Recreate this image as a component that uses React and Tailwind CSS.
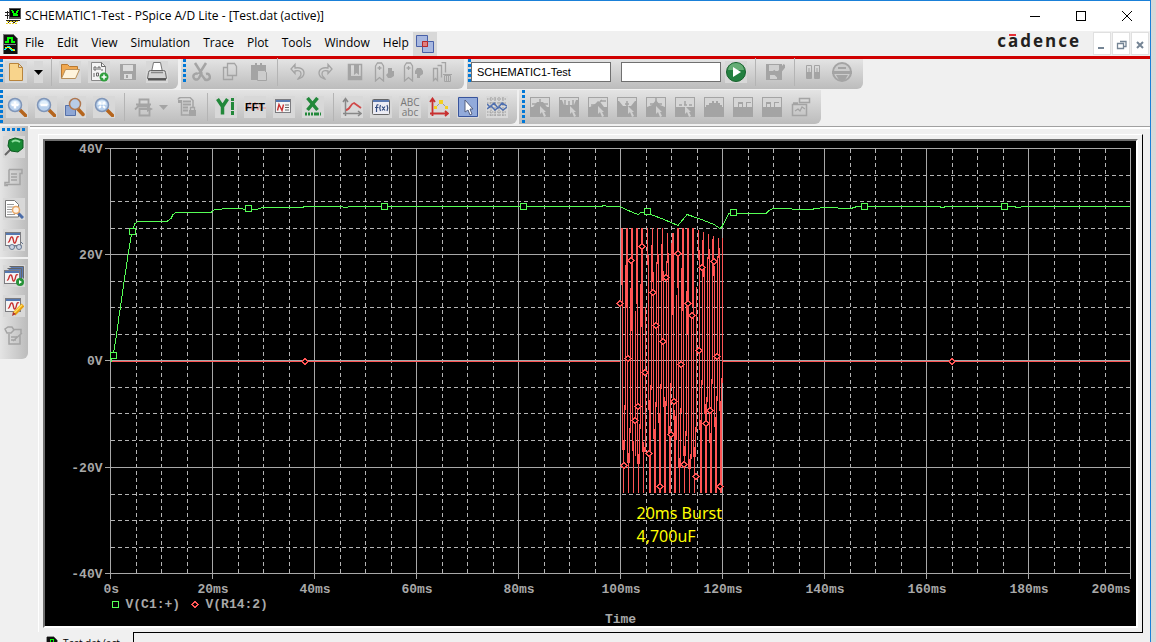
const XT = Array.from({ length: 11 }, (_, i) => 109.5 + i * 102);
const XS = XT.slice(0, 10).flatMap((x) => [x + 26, x + 51, x + 77]);
const YT = [148.5, 254.5, 360.5, 467.5, 573.5];
const YS = YT.slice(0, 4).flatMap((y) => [y + 27, y + 53, y + 80]);
const X_LABELS = ["20ms", "40ms", "60ms", "80ms", "100ms", "120ms", "140ms", "160ms", "180ms"];
const Y_LABELS = ["40V", "20V", "0V", "-20V", "-40V"];

const SQUARES = [[112, 355], [131, 231], [247, 208], [383, 206], [522, 206], [646, 211], [732, 212], [863, 206], [1003, 206]];
const DIAMONDS = [
  [304, 361], [951, 361],
  [619, 303], [630, 260], [641, 246], [627, 358], [637, 406], [634, 420], [623, 465], [644, 372], [648, 453],
  [659, 486], [652, 292], [655, 325], [662, 341], [665, 277], [677, 253], [680, 364], [673, 401], [670, 434],
  [683, 464], [695, 476], [687, 303], [691, 315], [701, 267], [713, 261], [698, 350], [716, 356], [709, 410],
  [705, 423], [719, 486],
];
const TRACE =
  "110,361 112,355 115,338 118,316 121,296 124,275 127,255 131,231 134,223 137,221 166,221 170,218 172,214 175,212 210,212 214,209 228,208 255,209 262,207 300,207 305,206 340,206 344,207 350,206 380,206 600,206 603,205 607,206 619,206 625,209 632,212 637,214 640,212 646,211 650,214 663,219 677,225 686,214 692,216 703,220 713,224 719,228 721,226 728,213 765,213 768,210 772,208 810,209 815,208 824,207 850,208 856,206 938,206 941,207 946,206 1012,206 1017,207 1023,206 1129,206";

function burstPath() {
  let d = "";
  for (let i = 0; i < 20; i++) {
    const t = 620.5 + Math.round(i * 5.1);
    const sag = i > 14 ? (i - 14) * 2 : i === 9 || i === 10 ? 5 : 0;
    const wideTop = i < 5 || (i > 9 && i < 15);
    const wideLow = (i > 4 && i < 11) || i > 14;
    const join = wideTop ? 285 + ((i * 23) % 50) : 250 + ((i * 17) % 35);
    const low = wideLow ? 400 + ((i * 29) % 45) : 450 + ((i * 13) % 25);
    d += `M${t} ${228 + sag}V${join}`;
    if (wideTop) d += `M${t + 1} ${228 + sag}V${join}`;
    d += `M${t + 1} ${join - 10}V${low}`;
    d += `M${t + 2} ${low - 10}V493`;
    if (wideLow) d += `M${t + 3} ${low - 4}V493`;
    d += `M${t + 3} ${join + 120}V${low}`;
    d += `M${t + 4} ${join - 20}V${join + 125}`;
  }
  return d;
}

function Chart() {
  return (
    <svg viewBox="45 141 1090 485" className="block h-full w-full bg-black" role="img" aria-label="Voltage against time">
      <g shapeRendering="crispEdges" fill="none" strokeWidth="1">
        <g stroke="#b4b4b4" strokeDasharray="4 3">
          {XS.map((x) => <path key={x} d={`M${x} 149V573`} />)}
          {YS.map((y) => <path key={y} d={`M110 ${y}H1129`} />)}
        </g>
        <g stroke="#a8a8a8">
          {XT.map((x) => <path key={x} d={`M${x} 148V579`} />)}
          {YT.map((y) => <path key={y} d={`M104 ${y}H1130`} />)}
        </g>
        <path d="M110 361.5H619M721 361.5H1129" stroke="#ff5555" />
        <path d={burstPath()} stroke="#ff5555" />
        <polyline points={TRACE} stroke="#55ff55" transform="translate(.5 .5)" />
        <g fill="#000" stroke="#ff5555">
          {DIAMONDS.map(([x, y]) => <path key={`${x}-${y}`} d={`M${x - 2.5} ${y + 0.5}l3-3 3 3-3 3z`} />)}
          <path d="M191.5 604.5l3-3 3 3-3 3z" />
        </g>
        <g fill="#000" stroke="#55ff55">
          {SQUARES.map(([x, y]) => <rect key={x} x={x - 2.5} y={y - 2.5} width="6" height="6" />)}
          <rect x="111.5" y="601.5" width="6" height="6" />
        </g>
      </g>
      <g className="font-['Liberation_Mono',monospace] text-[13px] font-bold" fill="#a8a8a8">
        {Y_LABELS.map((t, i) => <text key={t} x="102" y={YT[i] + 4.5} textAnchor="end">{t}</text>)}
        <text x="103" y="593">0s</text>
        {X_LABELS.map((t, i) => <text key={t} x={XT[i + 1] + 1} y="593" textAnchor="middle">{t}</text>)}
        <text x="1130" y="593" textAnchor="end">200ms</text>
        <text x="125" y="608">V(C1:+)</text>
        <text x="205" y="608">V(R14:2)</text>
        <text x="620" y="623" textAnchor="middle">Time</text>
      </g>
      <g className="font-['Noto_Sans',sans-serif] text-[16px]" fill="#ffff00">
        <text x="636" y="519">20ms Burst</text>
        <text x="636" y="542">4,700uF</text>
      </g>
    </svg>
  );
}

const G = "#a4a4a4";
const lens = (inner) => (
  <>
    <path d="M12.500 12.500l6 6" stroke="#b5651d" strokeWidth="3.500" strokeLinecap="round" />
    <circle cx="8" cy="8" r="6.500" fill="#b8d0ec" stroke="#7f95b8" strokeWidth="1.500" />
    <path d="M3.500 8a4.500 4.500 0 0 1 9 0z" fill="#e0eefa" />
    {inner}
  </>
);
const wave = <path d="M4 12c2 1 2-6 4-5s1 7 3 6 1-8 4-6" stroke="#c83030" strokeWidth="1.4" />;
const panel = (
  <>
    <rect x="1.5" y="2.5" width="15" height="13" fill="#f4f4f4" stroke="#7c7c80" />
    <path d="M2 4h14" stroke="#5578b0" strokeWidth="2" />
  </>
);
const frame = (
  <>
    <path d="M0 0h20v20H0z" fill={G} />
    <path d="M1 1h18v9H1z" fill="#d6d6d6" />
  </>
);
const spectrum = (line, solid, px = 10) => (
  <>
    {frame}
    <path d={solid} fill={G} />
    <path d={line} stroke={G} strokeWidth="1.500" fill="none" />
    <path d={`M${px} 9v8l2-2 2 5 2-1-2-4h2z`} fill="#d0d0d0" />
  </>
);
const filled = (line) => <>{frame}<path d={line} fill={G} /></>;

const ART = {
  new: <path d="M3.500 1.500h9l4 4v13h-13z M12.500 1.500v4h4" fill="#f8d48c" stroke="#b8843c" />,
  open: <><path d="M1.500 16.500v-14h6l2 2h8v3" fill="#f0a850" stroke="#b87830" /><path d="M1.500 16.500l4-9h14l-4 9z" fill="#fff4dc" stroke="#b8905c" /></>,
  append: <><path d="M2.500 .500h10l4 4v14h-14z" fill="#f4f4f4" stroke="#888" /><path d="M12.500 .500v4h4M5 5v3h2V5zM9 8V5h2v3M13 7v2M5 11v4M7.500 11h2v3h-2z" stroke="#666" /><circle cx="15" cy="15" r="4.500" fill="#2f9e3c" /><path d="M15 12.500v5M12.500 15h5" stroke="#fff" strokeWidth="1.500" /></>,
  save: <><path d="M2 2h16v16H2z" fill={G} /><path d="M5 3h10v6H5zM6 12h8v5H6z" fill="#ddd" /><path d="M8 13h2v3H8z" fill={G} /></>,
  print: <><path d="M4.500 10L6.500 .500h7l2 9.500" fill="#fff" stroke="#777" /><path d="M1.500 10.500q0-2 2-2h13q2 0 2 2l1 6h-19z" fill="#d4d4d4" stroke="#666" /><path d="M4 10.500h12" stroke="#888" strokeWidth="1.500" /><path d="M1 17.500h18" stroke="#555" strokeWidth="2" /></>,
  cut: <path d="M4 1l7 11M15 1L8 12M7 12a3 3 0 1 0 1 4l2-4 3 4a3 3 0 1 0 2-4" stroke={G} strokeWidth="2.500" />,
  copy: <path d="M7.500 1.500h7l2 3v9h-9zM7 5.500H3.500v12h9V14" stroke={G} strokeWidth="1.300" />,
  paste: <><path d="M2 3h15v15H2z" fill={G} /><path d="M8.500 8.500h7l2 2v8h-9z" fill="#ccc" stroke={G} /><path d="M6 1h2v2H6zM11 1h2v2h-2z" fill={G} /></>,
  undo: <path d="M8 2.500L4 7l4 4.500V9c4-1 6 0 6 3s-2 3-3 5c4-1 6-3 6-6 0-4-4-6-9-5z" stroke={G} strokeWidth="1.300" />,
  redo: <path d="M12 2.500L16 7l-4 4.500V9c-4-1-6 0-6 3s2 3 3 5c-4-1-6-3-6-6 0-4 4-6 9-5z" stroke={G} strokeWidth="1.300" />,
  book: <><path d="M3.500 2.500h13v15h-13z" stroke={G} strokeWidth="1.500" /><path d="M4 14h12v3H4zM9 2h5v11l-2.500-2L9 13zM4 3h2v12H4z" fill={G} /></>,
  markDown: <><path d="M1.500 4l2-3h4l2 3v15L5.500 15.500 1.500 19zM5.500 4v4M3.500 6h4" stroke={G} strokeWidth="1.300" /><path d="M14 6h4v3h2v5l-3 2h-3l-2-3 2-2z" fill={G} /></>,
  markUp: <><path d="M1.500 4l2-3h4l2 3v15L5.500 15.500 1.500 19zM5.500 4v4M3.500 6h4" stroke={G} strokeWidth="1.300" /><path d="M12 9l2-3h4l2 3v3l-3 2v2h-3v-4h-2z" fill={G} /></>,
  markDel: <><path d="M1.500 6.500h4v12l-2-2-2 2zM5.500 3.500h4v12M9.500 .500h4v10" stroke={G} strokeWidth="1.300" /><path d="M12.500 13.500h6v6h-6z" stroke={G} /><path d="M11 12.500h9M14.500 13v6M16.500 13v6" stroke={G} /></>,
  run: <><circle cx="10" cy="10" r="9.500" fill="#238040" stroke="#17612c" /><path d="M2 8a8 7 0 0 1 16 0z" fill="#65ad75" /><path d="M7 5l8 5-8 5z" fill="#fff" /></>,
  edit: <><path d="M1 2h16v16H1z" fill={G} /><path d="M4 3h10v6H4zM5 13h7v4H5z" fill="#d0d0d0" /><path d="M8 9l4 4 8-10" stroke={G} strokeWidth="3.500" /></>,
  pause: <><path d="M3.500 3.500h5v13h-5zM11.500 3.500h5v13h-5z" stroke={G} /><path d="M4 10h4v6H4zM12 10h4v6h-4z" fill={G} /><path d="M6 6v4M14 6v4" stroke={G} /></>,
  stop: <><circle cx="10" cy="10" r="9" stroke={G} strokeWidth="2" fill="#ccc" /><path d="M-.500 9h21v3h-21zM4 13h12l-3 5H7z" fill={G} /><path d="M6 6h8" stroke={G} strokeWidth="2" /></>,
  zoomIn: lens(<path d="M8 4.500v7M4.500 8h7" stroke="#fff" strokeWidth="2.500" />),
  zoomOut: lens(<path d="M4.500 8h7" stroke="#fff" strokeWidth="2.500" />),
  zoomArea: <><path d="M.500 8.500h10v10H.500z" fill="#8ea6d4" stroke="#5570a8" /><path d="M13 12l5 5.500" stroke="#b5651d" strokeWidth="3.500" strokeLinecap="round" /><circle cx="10" cy="7" r="5.500" fill="#b8cce8" stroke="#b07850" strokeWidth="1.500" /></>,
  zoomFit: lens(<path d="M5 5l2 2M11 5L9 7M5 11l2-2M11 11L9 9" stroke="#fff" strokeWidth="2" />),
  axis: <><path d="M5.500 7V2.500h9V7M2 7.500h15M16 9.500H4l-3 3M5.500 12v6.500h10V12z" stroke={G} strokeWidth="1.800" /><path d="M13 9l6 3-6 3z" fill={G} /></>,
  log: <><path d="M1 2.500q1-2 3-2h9l3 3v7M4.500 3v15H12" stroke={G} strokeWidth="1.500" /><path d="M1 3h3v3H1z" fill={G} /><path d="M6 4.500h8M6 7.500h8M6 10.500h5M6 13.500h5" stroke={G} strokeWidth="1.800" /><path d="M12 13h7v6h-7z" fill={G} /><path d="M13.500 13v-2.500h4V13" stroke={G} strokeWidth="1.300" /></>,
  y: <><path d="M1.500 2l5 7.500 5-7.500M6.500 9v8.500" stroke="#22883a" strokeWidth="3.500" /><path d="M16.500 1v18" stroke="#22883a" strokeWidth="3" strokeDasharray="3 1 8 1 4 1" /></>,
  perf: <>{panel}<path d="M3.500 13.500l1.500-6 3 6 1.500-6" stroke="#c83030" strokeWidth="1.400" /><path d="M11 8h4M11 10.500h4M11 13h4" stroke="#666" /></>,
  x: <><path d="M4.500 1l10 12M14.500 1l-10 12" stroke="#22883a" strokeWidth="3.500" /><path d="M2 17h16" stroke="#22883a" strokeWidth="3" strokeDasharray="2 1 2 1 2 1 5 1" /></>,
  trace: <><path d="M3.500 19V2M1 5l2.500-3.500L6 5M1 16.500h18M16 14l3 2.500-3 2.500" stroke="#888" strokeWidth="1.500" /><path d="M4 13c4 0 4-6 8-7l7 5" stroke="#d04848" strokeWidth="1.800" /></>,
  fx: <><rect x="1.500" y="2.500" width="17" height="15" rx="1" fill="#ececf4" stroke="#666" /><path d="M2 4h16" stroke="#5a78b0" strokeWidth="2" /><path d="M7.500 8c-2-1-2 1-2 7M4 10.500h3.500M9.500 8c-1 2-1 4 0 6M11 9.500l3 4M14 9.500l-3 4M16 8c1 2 1 4 0 6" stroke="#334c80" strokeWidth="1.200" /></>,
  points: <><path d="M3.500 19V2M1 5l2.500-3.500L6 5M1 16.500h18M16 14l3 2.500-3 2.500" stroke="#c83030" strokeWidth="1.800" /><path d="M6 11l6-6 6 6" stroke="#999" /><path d="M5 9h3v3H5zM10 3h4v4h-4zM16 9h3v3h-3z" fill="#f4d020" /></>,
  cursor: <><path d="M.500 .500h19v19H.500z" fill="#92aada" stroke="#38549c" /><path d="M7 3v12l3-2 2 5 2-1-2-5h3z" fill="#fff" stroke="#556080" /></>,
  grid: <><path d="M0 2h20M0 6h20M0 15h20M0 18h20M4 0v20M8 0v20M12 0v20M16 0v20" stroke="#999" strokeDasharray="1.500 1" /><path d="M0 7l3 3 4-4 4 5 4-5 5 3M0 12l4-3 4 4 4-3 4 3 4-3" stroke="#5070b0" strokeWidth="1.500" /></>,
  s1: spectrum("M2 7h16M10 2v4", "M3 10l4-5h6l4 5z"),
  s2: spectrum("M6 3v5M10 4v4M14 3v5", "M1 3h2l2 5h10l2-5h2v8H1z", 11),
  s3: spectrum("M3 8h4M12 4h6M10 7l4-4", "M2 10l5-3 3-3 3 2 3 4z"),
  s4: spectrum("M8 7h4M10 4v5", "M1 4h1l4 5h8l4-5h1v7H1z", 11),
  s5: spectrum("M4 7h12M10 1v6", "M1 10l5-2 4-5 4 5 5 2z"),
  s6: spectrum("M4 8h3M9 8h3M14 8h3M10 4v4", ""),
  s7: filled("M2 10V8h3V6h3V4h2v2h2V4h2v2h2v2h2v2z"),
  s8: filled("M5 10V5h5v5H9V7H6v3zM13 10V5h5v1h-4v4z"),
  s9: filled("M4 10V5h5v5H8V7H5v3zM12 10V5h5v1h-4v4z"),
  plotwin: <><path d="M1.500 7.500h14v11h-14zM2 6h5M8.500 1.500h10v4h-10z" stroke={G} strokeWidth="1.500" /><path d="M4 14l3-2 2 2 2-4 3 2" stroke={G} strokeWidth="1.300" /></>,
  pin: <><path d="M1 18l6-6" stroke="#666" strokeWidth="2" /><path d="M5 3l6-2 8 2v8l-5 4-7-1-3-5z" fill="#198a35" stroke="#0d5a20" /><path d="M8 5q3-3 8 0" stroke="#8fe0a0" strokeWidth="2" /></>,
  scroll: <path d="M5 1.500h13v4h-2v11H2M5 1.500v13H1v3h3M7 6h6M7 9h6M7 12h6" stroke={G} strokeWidth="1.500" />,
  find: <><path d="M1.500 1.500h9l4 4v12.500h-13z" fill="#fff" stroke="#777" /><path d="M3 5.500h7M3 8h9M3 10.500h6M3 13h5M3 15.500h8" stroke="#999" /><path d="M14 14l5 5" stroke="#4a6ca8" strokeWidth="3" /><circle cx="12" cy="11" r="3.500" fill="#fff4e8" stroke="#e8a868" strokeWidth="1.500" /></>,
  glasses: <>{panel}{wave}<path d="M4 16h14M17 12l2 2" stroke="#687890" /><circle cx="8" cy="17" r="2.500" fill="#ccd4e4" stroke="#687890" /><circle cx="15" cy="17" r="2.500" fill="#ccd4e4" stroke="#687890" /></>,
  stack: <><path d="M5.500 .500h14v12M3.500 2.500h14v12" stroke="#666" fill="#5c7cb4" /><g transform="translate(-1 2)">{panel}{wave}</g><circle cx="16" cy="16" r="4" fill="#279238" /><path d="M15 14l3 2-3 2z" fill="#fff" /></>,
  pencil: <>{panel}{wave}<path d="M10 18l9-9" stroke="#e8a010" strokeWidth="4" /><path d="M10 17l8-8" stroke="#ffe060" strokeWidth="1.500" /><path d="M8 20l1-4 3 2z" fill="#b03030" /></>,
  notes: <path d="M1 3l3-2h4l2 3-3 3H3zM9 3.500h8V8M5 8v10h11V9M7 11h6M7 14h5M9 15l9-8" stroke={G} strokeWidth="1.500" />,
};

function Tool({ art, label, on }) {
  return (
    <button aria-label={label} className={`flex size-[22px] shrink-0 items-center justify-center ${on ? "bg-[#d8d8d8]" : ""}`}>
      <svg viewBox="0 0 20 20" className="size-5" fill="none">{ART[art]}</svg>
    </button>
  );
}
const Grip = () => <span className="w-[3px] shrink-0 self-stretch bg-[repeating-linear-gradient(#0078d7_0_3px,transparent_3px_5px)]" />;
const Sep = () => <span className="h-7 w-px shrink-0 bg-[#b4b4b4]" />;
function Bar({ className = "", children }) {
  return <div className={`flex items-center rounded-br-md bg-linear-to-b from-[#e4e4e4] to-[#bcbcbc] ${className}`}>{children}</div>;
}

const AppIcon = ({ className }) => (
  <svg viewBox="0 0 16 20" className={className} shapeRendering="crispEdges">
    <path d="M1 0h10l4 4v16H1z" fill="#111" stroke="#777" />
    <path d="M3 8h3V4h4v4h3" fill="none" stroke="#0f0" strokeWidth="2" />
    <path d="M2 10h12" stroke="#888" />
    <path d="M3 16q3-6 5-2t5 2" fill="none" stroke="#0ee" strokeWidth="1.500" />
    <path d="M3 13q5 0 10 4" fill="none" stroke="#ee0" />
  </svg>
);

const MENUS = ["File", "Edit", "View", "Simulation", "Trace", "Plot", "Tools", "Window", "Help"];

export default function App() {
  return (
    <div className="flex h-screen w-full overflow-hidden bg-linear-to-r from-[#8c8c8c] to-[#d8d8d8] font-['Open_Sans','Noto_Sans',sans-serif] text-[12px] text-black">
      <div className="mr-[5px] flex min-w-0 flex-1 flex-col border-t border-r border-[#1a80d8] bg-[#f0f0f0]">
        <header className="flex h-[30px] shrink-0 items-center bg-white pl-[5px]">
          <svg viewBox="0 0 16 16" className="size-4" shapeRendering="crispEdges">
            <path d="M4 0h12v11H4z" fill="#555" /><path d="M5 1h10v8H5z" fill="#000" />
            <path d="M7 2l2 4h2l2-4M8 7h5" stroke="#0f0" strokeWidth="1.500" fill="none" />
            <path d="M0 4h4M0 7h4M2 3v8M1 12h14M3 15l3-3 3 3 3-3" stroke="#222" fill="none" /><path d="M2 13h12M1 15h12" stroke="#e8d020" strokeDasharray="2 1" />
          </svg>
          <h1 className="ml-1 whitespace-nowrap">SCHEMATIC1-Test - PSpice A/D Lite - [Test.dat (active)]</h1>
          <div className="ml-auto flex">
            <button aria-label="Minimize" className="flex h-7 w-[46px] items-center justify-center"><svg viewBox="0 0 10 10" className="size-[10px]" shapeRendering="crispEdges"><path d="M0 5.500h10" stroke="#000" /></svg></button>
            <button aria-label="Maximize" className="flex h-7 w-[46px] items-center justify-center"><svg viewBox="0 0 10 10" className="size-[10px]" shapeRendering="crispEdges"><path d="M.500 .500h9v9h-9z" fill="none" stroke="#000" /></svg></button>
            <button aria-label="Close" className="flex h-7 w-[46px] items-center justify-center"><svg viewBox="0 0 10 10" className="size-[10px]"><path d="M0 0l10 10M10 0L0 10" stroke="#000" /></svg></button>
          </div>
        </header>

        <nav className="flex h-7 shrink-0 items-center border-b-[3px] border-[#d00000]">
          <AppIcon className="ml-0.5 h-5 w-4" />
          <div className="ml-[7px] flex gap-[13px] pb-0.5">
            {MENUS.map((m) => <button key={m}>{m}</button>)}
          </div>
          <button aria-label="Cascade windows" className="ml-1 flex size-6 items-center justify-center bg-[#d8d8d8]">
            <svg viewBox="0 0 18 18" className="size-[18px]"><path d="M.500 .500h11v11H.500zM6.500 6.500h11v11h-11z" fill="#a8b8e0" stroke="#4860a8" /><path d="M6.500 6.500h5v5h-5z" fill="#e08080" stroke="#b82828" /></svg>
          </button>
          <div className="ml-auto flex items-center">
            <span className="relative mr-3 pb-[5px] font-['Open_Sans',sans-serif] text-[17px] leading-[20px] font-bold tracking-[2px] text-[#231f20]">cadence
              <span className="absolute top-[3px] left-3 h-0.5 w-[7px] bg-[#e83038]" />
            </span>
            {["M4 12h6", "M4.500 7.500h6v5h-6zM7 5.500h6v5h-2", "M5 6l6 6M11 6l-6 6"].map((d, i) => (
              <button key={d} aria-label={["Minimize child", "Restore child", "Close child"][i]} className="mr-px flex h-[23px] w-[18px] items-center justify-center border border-[#e0e0e0] bg-white">
                <svg viewBox="0 0 16 16" className="size-4"><path d={d} fill="none" stroke="#748494" strokeWidth={i === 1 ? 1.3 : 2} /></svg>
              </button>
            ))}
          </div>
        </nav>

        <div className="flex h-[30px] shrink-0 gap-[3px]">
          <Bar className="w-[178px] pb-[5px]">
            <Grip />
            <div className="ml-0.5 flex items-center">
              <Tool art="new" label="New" on />
              <button aria-label="New options" className="ml-[7px] mr-2 h-[22px] w-[9px] bg-[#d8d8d8]"><svg viewBox="0 0 9 22" className="h-[22px] w-[9px]"><path d="M0 9h9l-4.500 5z" fill="#000" /></svg></button>
              <Sep />
            </div>
            <div className="ml-[7px] flex items-center gap-[7px]">
              <Tool art="open" label="Open" on /><Tool art="append" label="Append file" on /><Tool art="save" label="Save" /><Tool art="print" label="Print" on />
            </div>
          </Bar>
          <Bar className="w-[283px] pb-[5px] pl-0.5">
            <Grip />
            <div className="ml-1 flex items-center gap-[7px]"><Tool art="cut" label="Cut" /><Tool art="copy" label="Copy" /><Tool art="paste" label="Paste" /><Sep /></div>
            <div className="ml-2 flex items-center gap-[7px]"><Tool art="undo" label="Undo" /><Tool art="redo" label="Redo" /><Tool art="book" label="Bookmarks" /><Tool art="markDown" label="Next bookmark" /><Tool art="markUp" label="Previous bookmark" /><Tool art="markDel" label="Clear bookmarks" /></div>
          </Bar>
          <Bar className="w-[396px] pb-[5px] pl-px">
            <Grip />
            <input aria-label="Simulation profile" defaultValue="SCHEMATIC1-Test" className="h-5 w-[140px] border border-[#707070] bg-white px-[5px] font-['Liberation_Sans',sans-serif] text-[11px]" />
            <input aria-label="Trace search" className="ml-[10px] h-5 w-[100px] border border-[#707070] bg-white px-1" />
            <div className="ml-1 flex items-center gap-2"><Tool art="run" label="Run" on /><Sep /><Tool art="edit" label="Edit profile" /></div>
            <div className="ml-2 flex items-center gap-[7px]"><Sep /><Tool art="pause" label="Pause" /><Tool art="stop" label="Stop" /></div>
          </Bar>
        </div>

        <div className="mt-px flex h-[34px] shrink-0 gap-0.5">
          <Bar className="w-[517px]">
            <Grip />
            <div className="ml-[3px] flex items-center gap-[7px]"><Tool art="zoomIn" label="Zoom in" on /><Tool art="zoomOut" label="Zoom out" on /><Tool art="zoomArea" label="Zoom area" on /><Tool art="zoomFit" label="Zoom fit" on /></div>
            <div className="ml-[9px] flex items-center gap-2"><Sep /><Tool art="axis" label="Log axis" />
              <svg viewBox="0 0 9 5" className="-ml-1 w-[9px]"><path d="M0 0h9L4.500 5z" fill={G} /></svg>
              <Tool art="log" label="Log file" /></div>
            <div className="ml-[9px] flex items-center gap-[7px]"><Sep /><Tool art="y" label="Add Y axis" on />
              <button className="relative flex size-[22px] items-center justify-center bg-[#d8d8d8] font-['Liberation_Sans',sans-serif] text-[11px] font-bold">
                <svg viewBox="0 0 22 22" className="absolute inset-0" fill="none"><path d="M1 12h3l2-6 2 8 3-8 3 8 3-7 1 5h4" stroke="#e89090" /></svg>
                <span className="relative">FFT</span>
              </button>
              <Tool art="perf" label="Performance analysis" on /><Tool art="x" label="Export" on /></div>
            <div className="ml-[9px] flex items-center gap-[7px]"><Sep /><Tool art="trace" label="Add trace" on /><Tool art="fx" label="Evaluate function" on />
              <button className="size-[22px] bg-[#d8d8d8] text-[10px] leading-[10px] text-[#777]">ABC abc</button>
              <Tool art="points" label="Mark points" on /><Tool art="cursor" label="Toggle cursor" on /><Tool art="grid" label="Grid" on /></div>
          </Bar>
          <Bar className="w-[302px] pl-[3px]">
            <Grip />
            <div className="ml-1 flex items-center gap-[7px]">
              {["s1", "s2", "s3", "s4", "s5", "s6", "s7", "s8", "s9", "plotwin"].map((s, i) => <Tool key={s} art={s} label={`Cursor tool ${i + 1}`} />)}
            </div>
          </Bar>
        </div>

        <div className="flex min-h-0 flex-1 pt-0.5">
          <aside className="mr-0.5 flex w-7 shrink-0 flex-col items-center self-start rounded-br-md bg-linear-to-r from-[#e4e4e4] to-[#bcbcbc] pt-0.5 pb-3">
            <span className="mb-[5px] h-[3px] w-6 bg-[repeating-linear-gradient(90deg,#0078d7_0_3px,transparent_3px_5px)]" />
            <div className="flex flex-col items-center gap-[9px]"><Tool art="pin" label="Pin" on /><Tool art="scroll" label="Output window" /><Tool art="find" label="View output file" on /><Tool art="glasses" label="View results" on /></div>
            <span className="my-1.5 h-0.5 w-full bg-[#f0f0f0]" />
            <div className="flex flex-col items-center gap-2"><Tool art="stack" label="Run queue" on /><Tool art="pencil" label="Edit simulation" on /><Tool art="notes" label="Notes" /></div>
          </aside>
          <main className="flex min-w-0 flex-1 flex-col border-t border-[#a0a0a0] pt-[7px] pr-[7px] pl-2 shadow-[inset_0_2px_0_#fff]">
            <div className="flex min-h-0 flex-1 flex-col border-t border-r border-l border-t-white border-r-black border-l-white pt-1 pr-1 pl-1">
              <div className="min-h-0 flex-1 border-t-2 border-r-2 border-b-2 border-l-2 border-t-[#707070] border-r-white border-b-white border-l-[#707070]">
                <Chart />
              </div>
              <div className="h-1 shrink-0" />
            </div>
            <div className="flex h-[10px] shrink-0 overflow-hidden">
              <button className="ml-1 flex h-6 w-[91px] shrink-0 items-start gap-[5px] pt-1 pl-1 text-[10px] whitespace-nowrap"><AppIcon className="h-4 w-3 shrink-0" /><span className="leading-[14px]">Test.dat (act...</span></button>
              <div className="flex-1 border-t border-l border-black" />
            </div>
          </main>
        </div>
      </div>
    </div>
  );
}
